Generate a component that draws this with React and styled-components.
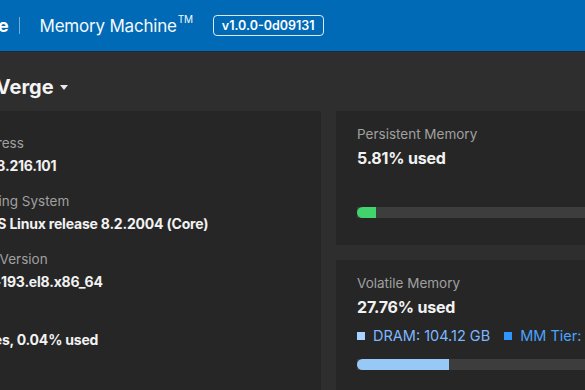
import React from 'react'
import styled, { createGlobalStyle } from 'styled-components'

const Global = createGlobalStyle`
    html, body {
        margin: 0;
        padding: 0;
        background: #2e2e2e;
        overflow: hidden;
    }
    body {
        font-family: Inter, "Noto Sans", "Liberation Sans", sans-serif;
        color: #f2f2f2;
    }
`

const Page = styled.div`
    width: 585px;
    height: 390px;
    overflow: hidden;
    background: #2e2e2e;
`

const Header = styled.header`
    height: 51px;
    background: #006ab6;
    border-bottom: 1px solid #1e2a36;
    display: flex;
    align-items: center;
`

const HeaderInner = styled.div`
    display: flex;
    align-items: center;
    margin-left: -85px;
    white-space: nowrap;
`

const Logo = styled.span`
    font-size: 18px;
    font-weight: 700;
    color: #ffffff;
    letter-spacing: -0.2px;
`

const Divider = styled.span`
    width: 1px;
    height: 17px;
    background: rgba(255, 255, 255, 0.45);
    margin: 0 19px 0 11px;
`

const Product = styled.span`
    font-size: 17px;
    font-weight: 400;
    color: #f4f8fc;
    letter-spacing: -0.2px;

    sup {
        font-size: 10px;
        margin-left: 1px;
        position: relative;
        top: -2px;
    }
`

const Badge = styled.span`
    margin-left: 20px;
    height: 19px;
    padding: 0 8px;
    border: 1px solid rgba(255, 255, 255, 0.85);
    border-radius: 4px;
    font-size: 12.5px;
    font-weight: 600;
    color: #ffffff;
    display: flex;
    align-items: center;
`

const TitleRow = styled.div`
    height: 59px;
    padding-top: 10px;
    box-sizing: border-box;
    display: flex;
    align-items: center;
    margin-left: -52px;
`

const Title = styled.h1`
    margin: 0;
    font-size: 20px;
    font-weight: 700;
    color: #f4f4f4;
    display: flex;
    align-items: center;
    gap: 6px;
`

const Caret = styled.span`
    width: 0;
    height: 0;
    border-left: 4.5px solid transparent;
    border-right: 4.5px solid transparent;
    border-top: 5px solid #e8e8e8;
    margin-top: 2px;
`

const Grid = styled.div`
    display: grid;
    grid-template-columns: 375px 375px;
    gap: 15px;
    margin-left: -54px;
`

const Panel = styled.section`
    background: #262626;
    box-sizing: border-box;
`

const InfoPanel = styled(Panel)`
    padding: 23px 16px 16px 9px;
    height: 320px;
`

const Column = styled.div`
    display: flex;
    flex-direction: column;
    gap: 15px;
`

const MemPanel = styled(Panel)`
    padding: 14px 22px 0 21px;
    height: ${p => p.$height}px;
`

const Item = styled.div`
    margin-bottom: 16px;
    white-space: nowrap;
`

const Label = styled.div`
    font-size: 13.5px;
    line-height: 18px;
    color: #a0a0a0;
`

const Value = styled.div`
    margin-top: 4px;
    font-size: 14px;
    line-height: 20px;
    font-weight: 700;
    letter-spacing: -0.2px;
    color: #f2f2f2;
`

const Usage = styled.div`
    margin-top: 4px;
    font-size: 16px;
    line-height: 22px;
    font-weight: 700;
    letter-spacing: -0.2px;
    color: #f2f2f2;
`

const Legend = styled.div`
    display: flex;
    align-items: center;
    gap: 14px;
    margin-top: 9px;
    font-size: 14.5px;
    line-height: 18px;
    white-space: nowrap;
`

const LegendItem = styled.span`
    display: flex;
    align-items: center;
    gap: 8px;
    color: ${p => p.$text};

    &::before {
        content: '';
        width: 8px;
        height: 8px;
        background: ${p => p.$color};
    }
`

const Track = styled.div`
    margin-top: ${p => p.$top}px;
    height: 11px;
    width: 100%;
    background: #3d3d3d;
    overflow: hidden;
`

const Fill = styled.div`
    height: 100%;
    background: ${p => p.$color};
    border-radius: 6px 0 0 6px;
`

const info = [
    ['IP Address', '192.168.216.101'],
    ['Operating System', 'CentOS Linux release 8.2.2004 (Core)'],
    ['Kernel Version', '4.18.0-193.el8.x86_64'],
    ['Disk', '2 Drives, 0.04% used'],
]

export default function App() {
    return (
        <Page>
            <Global />
            <Header>
                <HeaderInner>
                    <Logo>MemVerge</Logo>
                    <Divider />
                    <Product>Memory Machine<sup>TM</sup></Product>
                    <Badge>v1.0.0-0d09131</Badge>
                </HeaderInner>
            </Header>
            <TitleRow>
                <Title>MemVerge <Caret /></Title>
            </TitleRow>
            <Grid>
                <InfoPanel>
                    {info.map(([label, value]) => (
                        <Item key={label}>
                            <Label>{label}</Label>
                            <Value>{value}</Value>
                        </Item>
                    ))}
                </InfoPanel>
                <Column>
                    <MemPanel $height={134}>
                        <Label>Persistent Memory</Label>
                        <Usage>5.81% used</Usage>
                        <Track $top={38}>
                            <Fill $color="#41d46c" style={{ width: '5.81%' }} />
                        </Track>
                    </MemPanel>
                    <MemPanel $height={160}>
                        <Label>Volatile Memory</Label>
                        <Usage>27.76% used</Usage>
                        <Legend>
                            <LegendItem $color="#a6d3ff" $text="#7db8ff">DRAM: 104.12 GB</LegendItem>
                            <LegendItem $color="#2f95ff" $text="#4aa3ff">MM Tier: 0 GB</LegendItem>
                        </Legend>
                        <Track $top={14}>
                            <Fill $color="#97c9f7" style={{ width: '27.76%' }} />
                        </Track>
                    </MemPanel>
                </Column>
            </Grid>
        </Page>
    )
}
